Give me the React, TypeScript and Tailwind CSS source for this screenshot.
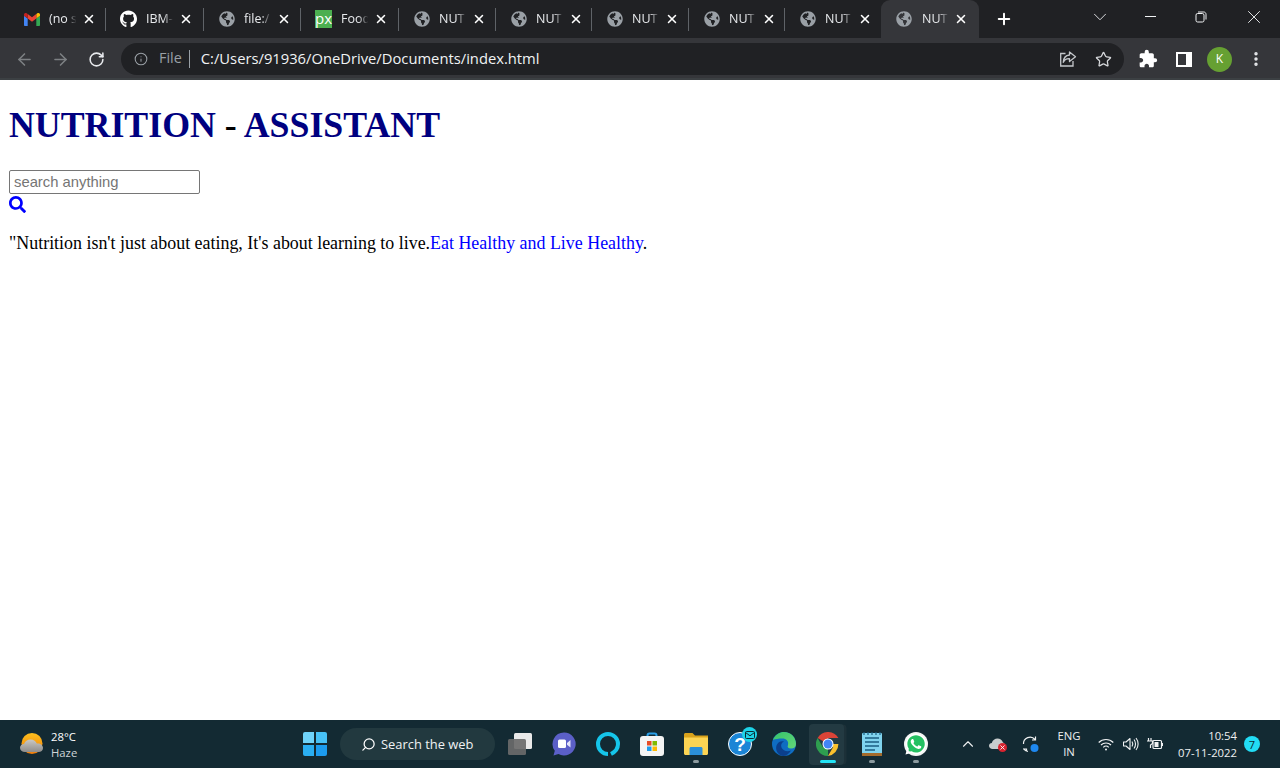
import React from "react";
import { FaGithub, FaGlobeAmericas, FaSearch, FaWhatsapp } from "react-icons/fa";
import { MdExtension } from "react-icons/md";
import { ArrowLeft, ArrowRight, ChevronDown, ChevronUp, Info, MoreVertical, Plus, RotateCw, Star, X, Search } from "lucide-react";

const Gmail = () => (
  <svg width="16" height="13" viewBox="0 0 16 13">
    <path d="M1.1 13H3.7V5.6L0 2.8V11.9C0 12.5.5 13 1.1 13Z" fill="#4285f4" />
    <path d="M12.3 13H14.9C15.5 13 16 12.5 16 11.9V2.8L12.3 5.6Z" fill="#34a853" />
    <path d="M12.3 1V5.6L16 2.8V1.6C16 .3 14.5-.5 13.4.3Z" fill="#fbbc04" />
    <path d="M3.7 5.6V1L8 4.2 12.3 1V5.6L8 8.8Z" fill="#ea4335" />
    <path d="M0 1.6V2.8L3.7 5.6V1L2.6.3C1.5-.5 0 .3 0 1.6Z" fill="#c5221f" />
  </svg>
);

const Globe = () => <FaGlobeAmericas size={16} className="text-[#9aa0a6]" />;
const PxIcon = () => (
  <div className="flex h-[18px] w-[18px] items-center justify-center bg-[#4caf50] pb-[2px] font-['Open_Sans',sans-serif] text-[15px] leading-none text-white">
    px
  </div>
);

const tabs = [
  { icon: <Gmail />, title: "(no s", w: "w-[97px]" },
  { icon: <FaGithub size={18} className="text-white" />, title: "IBM-", w: "w-[98px]" },
  { icon: <Globe />, title: "file:/", w: "w-[97px]" },
  { icon: <PxIcon />, title: "Food", w: "w-[98px]" },
  { icon: <Globe />, title: "NUT", w: "w-[97px]" },
  { icon: <Globe />, title: "NUT", w: "w-[96px]" },
  { icon: <Globe />, title: "NUT", w: "w-[97px]" },
  { icon: <Globe />, title: "NUT", w: "w-[96px]" },
  { icon: <Globe />, title: "NUT", w: "w-[96px]" },
];

function Tab({ icon, title, w, last }: { icon: React.ReactNode; title: string; w: string; last: boolean }) {
  return (
    <div className={`relative flex h-full shrink-0 items-center pl-[14px] ${w}`}>
      <div className="flex w-[17px] items-center justify-center">{icon}</div>
      <div className="ml-[9px] w-[29px] overflow-hidden whitespace-nowrap text-[12.5px] leading-[16px] text-[#e8eaed] [mask-image:linear-gradient(to_right,black_60%,transparent_95%)]">
        {title}
      </div>
      <X size={14} strokeWidth={2.6} className="ml-[4px] shrink-0 text-white" />
      {!last && <div className="absolute right-[0px] top-[8px] h-[23px] w-px bg-[#5f6368]" />}
    </div>
  );
}

const ShareIcon = () => (
  <svg width="18" height="18" viewBox="0 0 18 18" fill="none" stroke="#c4c7cb" strokeWidth="1.3">
    <path d="M6.5 3.5H1.7V16H14V11" />
    <path d="M10.5 2 16.5 6.8 10.5 11.5V8.6C7.5 8.4 5.5 9.6 4.3 12.3 4.5 8 6.8 5.3 10.5 5Z" strokeLinejoin="round" />
  </svg>
);

const Restore = () => (
  <svg width="12" height="12" viewBox="0 0 12 12" fill="none" stroke="#f1f3f4" strokeWidth="1">
    <rect x="1" y="2.5" width="8" height="8.5" rx="1.6" />
    <path d="M3 1H8.8C10 1 11 2 11 3.2V8.5" />
  </svg>
);

function Weather() {
  return (
    <svg width="26" height="24" viewBox="0 0 26 24">
      <defs>
        <linearGradient id="sun" x1="0" y1="0" x2="0" y2="1">
          <stop offset="0" stopColor="#fdbf1d" />
          <stop offset="1" stopColor="#ee7d0c" />
        </linearGradient>
        <linearGradient id="cl" x1="0" y1="0" x2="0" y2="1">
          <stop offset="0" stopColor="#c9c8c4" />
          <stop offset="1" stopColor="#8f8d8a" />
        </linearGradient>
      </defs>
      <circle cx="13" cy="11.5" r="10.5" fill="url(#sun)" />
      <path d="M6 20C3 20 1 18.200 1 15.800 1 13.500 3 12 5 12 6 9 8.500 7.500 11.500 7.500 14.800 7.500 17 9.500 17.800 11.500 21 11 24 13 24 16 24 18.500 22 20 19.500 20Z" fill="url(#cl)" />
    </svg>
  );
}

function WinLogo() {
  return (
    <div className="grid h-[24px] w-[24px] grid-cols-2 gap-[1.5px]">
      <div className="rounded-tl-[2px] bg-[#6fd3fa]" />
      <div className="rounded-tr-[2px] bg-[#47c1f6]" />
      <div className="rounded-bl-[2px] bg-[#2aaef2]" />
      <div className="rounded-br-[2px] bg-[#1c9bee]" />
    </div>
  );
}

const TaskView = () => (
  <svg width="25" height="23" viewBox="0 0 25 23">
    <rect x="6" y="0" width="18" height="16" rx="1.5" fill="#e9e9e9" />
    <rect x="0" y="6" width="18" height="16" rx="1.5" fill="#6a6a6a" fillOpacity="0.92" />
  </svg>
);
const Chat = () => (
  <svg width="24" height="24" viewBox="0 0 24 24">
    <path d="M12 0.500A11.500 11.500 0 1 1 6.500 22L1.500 23.500 2.800 18.800A11.500 11.500 0 0 1 12 .5Z" fill="#5b5fc7" />
    <rect x="6" y="7.500" width="8" height="8.500" rx="1.500" fill="#fff" />
    <path d="M15 11 18.500 8V15.500L15 12.800Z" fill="#e3e4fb" />
  </svg>
);
const Cortana = () => (
  <svg width="24" height="24" viewBox="0 0 24 24" fill="none">
    <path d="M12 22A10 10 0 1 1 22 12C22 17 19 20 15 22" stroke="#15c5ea" strokeWidth="4" />
  </svg>
);
const Store = () => (
  <svg width="24" height="24" viewBox="0 0 24 24">
    <path d="M7.500 6V3.500C7.500 2.300 8.300 1.500 9.500 1.500H14.500C15.700 1.500 16.500 2.300 16.500 3.500V6" fill="none" stroke="#2a9fe8" strokeWidth="2" />
    <rect x="0" y="4" width="24" height="20" rx="3" fill="#f4f4f4" />
    <rect x="7" y="9" width="4.500" height="4.500" fill="#e74c25" />
    <rect x="12.500" y="9" width="4.500" height="4.500" fill="#7fba00" />
    <rect x="7" y="14.500" width="4.500" height="4.500" fill="#1e9bea" />
    <rect x="12.500" y="14.500" width="4.500" height="4.500" fill="#fdb900" />
  </svg>
);
const Explorer = () => (
  <svg width="24" height="22" viewBox="0 0 24 22">
    <path d="M0 1.500C0 .7.700 0 1.500 0H8.500L11 2.500H24V8H0Z" fill="#d9a21b" />
    <path d="M0 4.500H24V20.500C24 21.300 23.300 22 22.500 22H1.500C.7 22 0 21.300 0 20.500Z" fill="#fcd453" />
    <path d="M5.500 15.500C5.500 14.700 6.200 14 7 14H17C17.800 14 18.500 14.700 18.500 15.500V22H5.500Z" fill="#2b8fd8" />
  </svg>
);
const Help = () => (
  <div className="relative h-[24px] w-[24px]">
    <div className="flex h-[24px] w-[24px] items-center justify-center rounded-full border-[1.5px] border-white bg-[#1b85d6] font-['Liberation_Sans',sans-serif] text-[19px] font-bold leading-none text-white">
      ?
    </div>
    <div className="absolute -right-[5px] -top-[5px] flex h-[15px] w-[15px] items-center justify-center rounded-full bg-[#1dd3e8]">
      <svg width="10" height="8" viewBox="0 0 10 8" fill="none" stroke="#0b2a33" strokeWidth="1">
        <rect x=".5" y=".5" width="9" height="7" rx="1" />
        <path d="M.5 1.500 5 4.800 9.500 1.500" />
      </svg>
    </div>
  </div>
);
const Edge = () => (
  <svg width="24" height="24" viewBox="0 0 24 24">
    <defs>
      <linearGradient id="edgeA" x1="0" y1="0" x2="1" y2="1">
        <stop offset="0" stopColor="#36c26b" />
        <stop offset="1" stopColor="#63d678" />
      </linearGradient>
    </defs>
    <circle cx="12" cy="12" r="12" fill="#0f6dc2" />
    <path d="M1 8C3 2.500 8 0 12 0 19 0 24 5.500 24 12 24 15 22 16.500 19 16.500 16 16.500 15 15 16 13 17 9 14 6.500 10.500 6.500 6.500 6.500 3 7 1 8Z" fill="url(#edgeA)" />
    <path d="M11 24C6 23 3 18.500 4.500 13.500 5.800 10 9 8.500 12 9.500 9.500 10.500 8.500 13 9.500 15.500 11 19 15.500 20 19 18.500 17 22 14 24 11 24Z" fill="#0b3f8c" />
  </svg>
);
const Chrome = () => (
  <svg width="24" height="24" viewBox="0 0 24 24">
    <path d="M12 12 1.600 6A12 12 0 0 1 22.400 6H12Z" fill="#db4437" />
    <path d="M12 12H22.400A12 12 0 0 1 12 24L17.200 15Z" fill="#fbc02d" />
    <path d="M12 24A12 12 0 0 1 1.600 6L6.800 15 12 12Z" fill="#2e9e4f" />
    <circle cx="12" cy="12" r="5.500" fill="#fff" />
    <circle cx="12" cy="12" r="4.500" fill="#4285f4" />
  </svg>
);
const Notepad = () => (
  <svg width="20" height="24" viewBox="0 0 20 24">
    <rect x="0" y="1" width="20" height="23" rx="1" fill="#7fd3ee" />
    <rect x="0" y="21" width="20" height="3" fill="#a36a2b" />
    <path d="M3 6H17M3 10H17M3 14H17M3 18H13" stroke="#1b5f82" strokeWidth="1.600" />
    <path d="M2 0V3M6 0V3M10 0V3M14 0V3M18 0V3" stroke="#1b5f82" strokeWidth="1.200" />
  </svg>
);
const Whatsapp = () => (
  <div className="relative flex h-[24px] w-[24px] items-center justify-center">
    <div className="absolute bottom-0 left-0 h-[24px] w-[24px] rounded-full bg-[#f4f4f4]" />
    <div className="absolute left-[2px] top-[2px] h-[20px] w-[20px] rounded-full bg-[#25c062]" />
    <FaWhatsapp size={24} className="relative text-white" />
  </div>
);

function Slot({ children, mark, active }: { children: React.ReactNode; mark?: boolean; active?: boolean }) {
  return (
    <div className="relative flex h-[48px] w-[44px] shrink-0 items-center justify-center">
      {active && <div className="absolute left-[3px] top-[4px] h-[41px] w-[35px] rounded-[4px] bg-[#233a42] shadow-[3px_0_0_-0.5px_#1c3038]" />}
      <div className="relative">{children}</div>
      {mark && <div className="absolute bottom-[5px] left-[19px] h-[3px] w-[6px] rounded-full bg-[#8c9a9f]" />}
      {active && <div className="absolute bottom-[5px] left-[14px] h-[3px] w-[16px] rounded-full bg-[#23e3f5]" />}
    </div>
  );
}

export default function App() {
  return (
    <div className="flex h-screen w-full flex-col overflow-hidden bg-white font-['Open_Sans','Noto_Sans',sans-serif]">
      <header className="shrink-0">
        <div className="flex h-[38px] items-stretch bg-[#202124]">
          <div className="flex h-full shrink-0 pl-[9px]">
            {tabs.map((t, i) => (
              <Tab key={i} icon={t.icon} title={t.title} w={t.w} last={i === 8} />
            ))}
          </div>
          <div className="flex h-full w-[98px] shrink-0 items-center rounded-t-[9px] bg-[#35363a] pl-[15px]">
            <Globe />
            <div className="ml-[10px] w-[27px] overflow-hidden whitespace-nowrap text-[12.5px] leading-[16px] text-[#e8eaed] [mask-image:linear-gradient(to_right,black_60%,transparent_100%)]">
              NUT
            </div>
            <X size={14} strokeWidth={2.6} className="ml-[5px] text-white" />
          </div>
          <div className="ml-[16px] flex items-center">
            <Plus size={18} strokeWidth={2.6} className="text-white" />
          </div>
          <div className="ml-auto flex items-center pb-[5px]">
            <ChevronDown size={22} strokeWidth={1} className="mr-[34px] text-[#e8eaed]" />
            <div className="mr-[39px] h-px w-[11px] bg-[#f1f3f4]" />
            <div className="mr-[36px]">
              <Restore />
            </div>
            <X size={22} strokeWidth={1} className="mr-[15px] text-[#f1f3f4]" />
          </div>
        </div>
        <div className="flex h-[40px] items-center bg-[#35363a] pt-[2px]">
          <ArrowLeft size={19} strokeWidth={2} className="ml-[15px] text-[#7d8083]" />
          <ArrowRight size={19} strokeWidth={2} className="ml-[17px] text-[#7d8083]" />
          <RotateCw size={17} strokeWidth={2.2} className="ml-[18px] text-[#e8eaed]" />
          <div className="ml-[16px] flex h-[32px] w-[1003px] items-center rounded-full bg-[#202124]">
            <Info size={14} strokeWidth={1.8} className="ml-[13px] text-[#9aa0a6]" />
            <span className="ml-[11px] pb-[2px] text-[14.4px] text-[#9aa0a6]">File</span>
            <div className="ml-[7px] h-[18px] w-px bg-[#9aa0a6]" />
            <span className="ml-[11px] pb-[2px] text-[14.75px] text-[#f1f3f4]">C:/Users/91936/OneDrive/Documents/index.html</span>
            <div className="ml-auto flex items-center">
              <ShareIcon />
              <Star size={17} strokeWidth={1.8} className="ml-[18px] mr-[12px] text-[#d5d7da]" />
            </div>
          </div>
          <MdExtension size={20} className="ml-[14px] text-white" />
          <div className="ml-[18px] flex h-[15px] w-[16px] border-[2px] border-white bg-white">
            <div className="h-full w-[8px] bg-[#35363a]" />
          </div>
          <div className="ml-[15px] flex h-[25px] w-[25px] items-center justify-center rounded-full bg-[#66a032] text-[12px] text-white">K</div>
          <MoreVertical size={18} strokeWidth={2.6} className="ml-[15px] text-[#e8eaed]" />
        </div>
        <div className="h-[2px] bg-[#3c4043]" />
      </header>

      <main className="min-h-0 flex-1 px-[9px] font-['Liberation_Serif',serif] text-black">
        <h1 className="mt-[23px] text-[35.8px] font-bold leading-[44px] text-[#000080]">
          NUTRITION <span className="text-black">-</span> ASSISTANT
        </h1>
        <input
          readOnly
          placeholder="search anything"
          className="mt-[23px] block h-[24px] w-[191px] rounded-[2px] border border-[#767676] px-[4px] font-['Liberation_Sans',sans-serif] text-[14.8px] outline-none placeholder:text-[#757575]"
        />
        <FaSearch size={17} className="mt-[2px] text-[#0000ff]" />
        <p className="mt-[19px] text-[17.92px] leading-[22px]">
          "Nutrition isn't just about eating, It's about learning to live.<span className="text-[#0000ff]">Eat Healthy and Live Healthy</span>.
        </p>
      </main>

      <footer className="flex h-[48px] shrink-0 items-center bg-[#132a33] text-white">
        <div className="ml-[19px] flex w-[274px] shrink-0 items-center">
          <Weather />
          <div className="ml-[6px] pt-[1px] text-[11.3px] leading-[16px]">
            <div>28°C</div>
            <div className="text-[#cfd5d8]">Haze</div>
          </div>
        </div>
        <div className="flex items-center">
          <Slot><WinLogo /></Slot>
          <div className="ml-[3px] mr-[3px] flex h-[32px] w-[155px] items-center rounded-full bg-[#22393f] pl-[21px]">
            <Search size={15} strokeWidth={2} className="-scale-x-100 text-white" />
            <span className="ml-[5px] pt-[2px] text-[12.9px] text-[#f0f2f3]">Search the web</span>
          </div>
          <Slot><TaskView /></Slot>
          <Slot><Chat /></Slot>
          <Slot><Cortana /></Slot>
          <Slot><Store /></Slot>
          <Slot mark><Explorer /></Slot>
          <Slot><Help /></Slot>
          <Slot><Edge /></Slot>
          <Slot active><Chrome /></Slot>
          <Slot mark><Notepad /></Slot>
          <Slot mark><Whatsapp /></Slot>
        </div>
        <div className="ml-[21px] flex flex-1 items-center">
          <ChevronUp size={18} strokeWidth={1.5} className="text-[#eef0f1]" />
          <div className="relative ml-[12px] h-[14px] w-[18px]">
            <svg width="16" height="11" viewBox="0 0 16 11" className="mt-[1px]">
              <path d="M3.500 11C1.500 11 0 9.500 0 7.800 0 6.200 1.300 5 2.800 5 3.500 2 6 .5 8.500 .5 11 .5 13 2 14 4.500 15.500 5 16 6.500 16 8 16 9.800 14.500 11 13 11Z" fill="#c8cccd" />
            </svg>
            <div className="absolute -bottom-[1px] right-0 flex h-[9px] w-[9px] items-center justify-center rounded-full bg-[#d8232f]">
              <X size={7} strokeWidth={3} className="text-white" />
            </div>
          </div>
          <svg width="18" height="18" viewBox="0 0 18 18" className="ml-[15px]" fill="none" stroke="#eef0f1" strokeWidth="1.200">
            <path d="M1.500 9A6.500 6.500 0 0 1 13 4.500M10 5H13.500V1.500" />
            <path d="M1 14H4.500V17M1.500 13.500A6 6 0 0 0 6 16.500" />
            <circle cx="12.500" cy="13" r="4" fill="#1e88f0" stroke="none" />
          </svg>
          <div className="ml-[14px] w-[30px] text-center text-[11.3px] leading-[16px] text-[#eef0f1]">
            <div>ENG</div>
            <div>IN</div>
          </div>
          <svg width="16" height="13" viewBox="0 0 16 13" className="ml-[14px]" fill="none" stroke="#f0f2f3" strokeWidth="1.200">
            <path d="M.7 4.500C4.700.5 11.300.5 15.300 4.500M3 7C5.700 4.300 10.300 4.300 13 7M5.300 9.300C6.800 7.800 9.200 7.800 10.700 9.300" />
            <circle cx="8" cy="11.500" r="1" fill="#f0f2f3" stroke="none" />
          </svg>
          <svg width="16" height="14" viewBox="0 0 16 14" className="ml-[9px]" fill="none" stroke="#f0f2f3" strokeWidth="1.100">
            <path d="M.5 5V9H3L7 12.500V1.500L3 5Z" strokeLinejoin="round" />
            <path d="M9 4.500C10 6 10 8 9 9.500M11 2.500C13 5 13 9 11 11.500M13 1C15.800 4.500 15.800 9.500 13 13" />
          </svg>
          <svg width="16" height="12" viewBox="0 0 16 12" className="ml-[8px]">
            <path d="M1.500 0V3M4 0V3M0 3H5.500V5.500L3.500 7V10" fill="none" stroke="#f0f2f3" strokeWidth="1.200" />
            <rect x="6" y="2.500" width="8.500" height="8" rx="1" fill="none" stroke="#f0f2f3" strokeWidth="1.200" />
            <rect x="7.500" y="4" width="4" height="5" fill="#f0f2f3" />
            <rect x="15" y="5" width="1" height="3" fill="#f0f2f3" />
          </svg>
          <div className="ml-auto w-[60px] text-right text-[11.3px] leading-[17px] text-[#eef0f1]">
            <div>10:54</div>
            <div>07-11-2022</div>
          </div>
          <div className="ml-[7px] mr-[20px] flex h-[16px] w-[16px] items-center justify-center rounded-full bg-[#22dcf5] text-[11px] leading-none text-[#0b2a33]">7</div>
        </div>
      </footer>
    </div>
  );
}
